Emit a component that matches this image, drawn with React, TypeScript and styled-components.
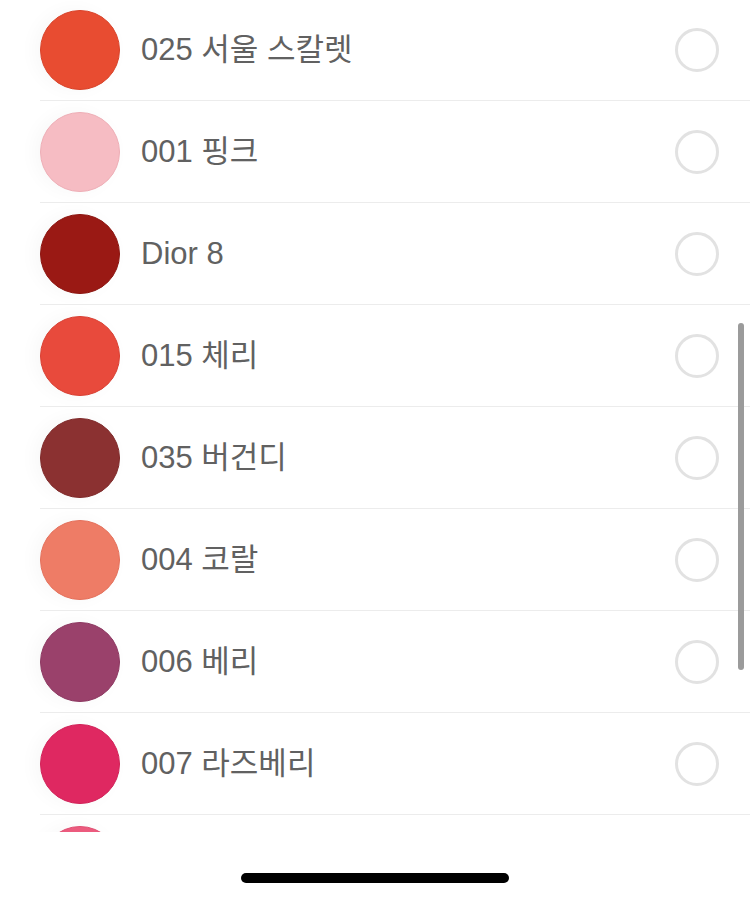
import React from 'react';
import styled, { createGlobalStyle } from 'styled-components';

interface Shade {
    id: string;
    label?: string;
    color: string;
    edge: string;
}

// the last swatch only peeks out above the home area, its name is out of view
const shades: Shade[] = [
    { id: '025', label: '025 서울 스칼렛', color: '#e84c31', edge: '#d8432a' },
    { id: '001', label: '001 핑크', color: '#f6bcc3', edge: '#eeaeb6' },
    { id: 'd8', label: 'Dior 8', color: '#9a1914', edge: '#8c1510' },
    { id: '015', label: '015 체리', color: '#e84a3c', edge: '#d94033' },
    { id: '035', label: '035 버건디', color: '#8b3131', edge: '#7f2a2a' },
    { id: '004', label: '004 코랄', color: '#ee7c66', edge: '#e4705b' },
    { id: '006', label: '006 베리', color: '#9a416b', edge: '#8d3861' },
    { id: '007', label: '007 라즈베리', color: '#df2861', edge: '#d12258' },
    { id: '008', color: '#ec5b7e', edge: '#e05073' },
];

const App: React.FC = () => {
    return (
        <>
            <GlobalStyle />
            <Screen>
                <ListViewport>
                    <ShadeList>
                        {shades.map((shade) => (
                            <ShadeRow key={shade.id}>
                                <Swatch color={shade.color} edge={shade.edge} />
                                <ShadeName>{shade.label}</ShadeName>
                                <Radio />
                            </ShadeRow>
                        ))}
                    </ShadeList>
                    <ScrollThumb />
                </ListViewport>
                <HomeArea>
                    <HomeIndicator />
                </HomeArea>
            </Screen>
        </>
    );
};

export default App;

const GlobalStyle = createGlobalStyle`
    html, body {
        margin: 0;
        padding: 0;
        background: #ffffff;
    }
    body {
        font-family: "Liberation Sans", "Noto Sans CJK KR", sans-serif;
    }
`;

const Screen = styled.div`
    width: 750px;
    height: 900px;
    display: flex;
    flex-direction: column;
    background: #ffffff;
    overflow: hidden;
`;

const ListViewport = styled.div`
    position: relative;
    height: 832px;
    overflow: hidden;
`;

const ShadeList = styled.ul`
    list-style: none;
    margin: -1px 0 0;
    padding: 0;
`;

const ShadeRow = styled.li`
    height: 101px;
    display: flex;
    align-items: center;
    margin-left: 40px;
    padding-right: 31px;
    border-bottom: 1px solid #ececec;
`;

const Swatch = styled.span<{ color: string; edge: string }>`
    flex: 0 0 auto;
    width: 78px;
    height: 78px;
    border-radius: 50%;
    background: ${(props) => props.color};
    border: 1px solid ${(props) => props.edge};
    box-shadow: -6px 0 18px rgba(0, 0, 0, 0.03);
`;

const ShadeName = styled.span`
    flex: 1;
    margin-left: 21px;
    padding-bottom: 0;
    font-size: 31px;
    line-height: 36px;
    color: #616161;
    white-space: nowrap;
`;

const Radio = styled.span`
    flex: 0 0 auto;
    width: 38px;
    height: 38px;
    border-radius: 50%;
    border: 3px solid #e2e2e2;
`;

const ScrollThumb = styled.div`
    position: absolute;
    right: 6px;
    top: 323px;
    width: 6px;
    height: 347px;
    border-radius: 3px;
    background: #9b9b9b;
`;

const HomeArea = styled.div`
    flex: 1;
    display: flex;
    justify-content: center;
    padding-top: 41px;
`;

const HomeIndicator = styled.div`
    width: 268px;
    height: 10px;
    border-radius: 5px;
    background: #000000;
`;
